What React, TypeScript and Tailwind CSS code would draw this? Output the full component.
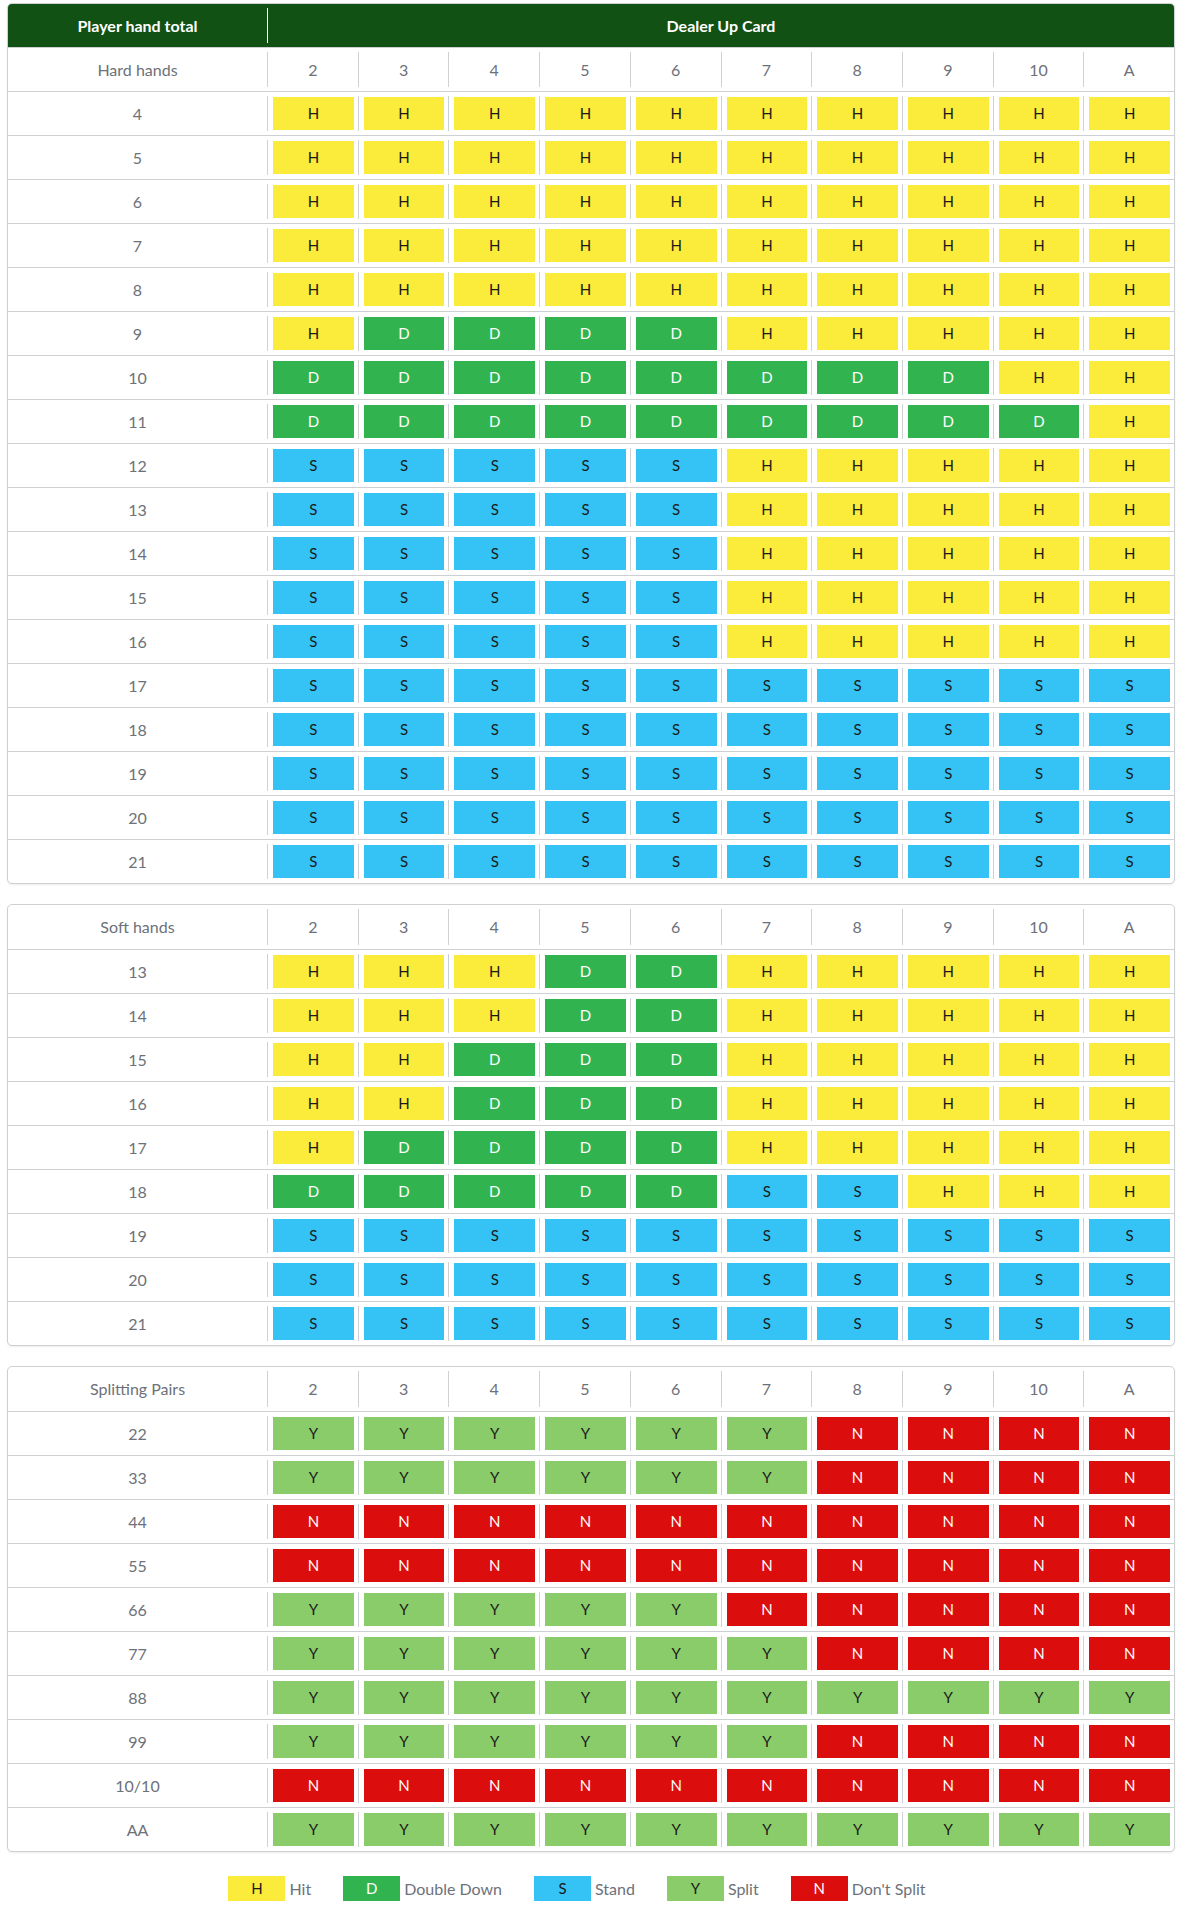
import React from 'react'

type Move = 'H' | 'D' | 'S' | 'Y' | 'N'

const DEALER = ['2', '3', '4', '5', '6', '7', '8', '9', '10', 'A']

const MOVE_STYLE: Record<Move, string> = {
  H: 'bg-[#fbeb3b] text-[#1a1a1a]',
  D: 'bg-[#31b44f] text-white',
  S: 'bg-[#34c3f4] text-[#1a1a1a]',
  Y: 'bg-[#8acb6a] text-[#1a1a1a]',
  N: 'bg-[#dc0d0d] text-white',
}

const row = (s: string) => s.split('') as Move[]

const HARD: [string, Move[]][] = [
  ['4', row('HHHHHHHHHH')],
  ['5', row('HHHHHHHHHH')],
  ['6', row('HHHHHHHHHH')],
  ['7', row('HHHHHHHHHH')],
  ['8', row('HHHHHHHHHH')],
  ['9', row('HDDDDHHHHH')],
  ['10', row('DDDDDDDDHH')],
  ['11', row('DDDDDDDDDH')],
  ['12', row('SSSSSHHHHH')],
  ['13', row('SSSSSHHHHH')],
  ['14', row('SSSSSHHHHH')],
  ['15', row('SSSSSHHHHH')],
  ['16', row('SSSSSHHHHH')],
  ['17', row('SSSSSSSSSS')],
  ['18', row('SSSSSSSSSS')],
  ['19', row('SSSSSSSSSS')],
  ['20', row('SSSSSSSSSS')],
  ['21', row('SSSSSSSSSS')],
]

const SOFT: [string, Move[]][] = [
  ['13', row('HHHDDHHHHH')],
  ['14', row('HHHDDHHHHH')],
  ['15', row('HHDDDHHHHH')],
  ['16', row('HHDDDHHHHH')],
  ['17', row('HDDDDHHHHH')],
  ['18', row('DDDDDSSHHH')],
  ['19', row('SSSSSSSSSS')],
  ['20', row('SSSSSSSSSS')],
  ['21', row('SSSSSSSSSS')],
]

const PAIRS: [string, Move[]][] = [
  ['22', row('YYYYYYNNNN')],
  ['33', row('YYYYYYNNNN')],
  ['44', row('NNNNNNNNNN')],
  ['55', row('NNNNNNNNNN')],
  ['66', row('YYYYYNNNNN')],
  ['77', row('YYYYYYNNNN')],
  ['88', row('YYYYYYYYYY')],
  ['99', row('YYYYYYNNNN')],
  ['10/10', row('NNNNNNNNNN')],
  ['AA', row('YYYYYYYYYY')],
]

const LEGEND: [Move, string][] = [
  ['H', 'Hit'],
  ['D', 'Double Down'],
  ['S', 'Stand'],
  ['Y', 'Split'],
  ['N', "Don't Split"],
]

function Row({ label, first, children }: { label: string; first?: boolean; children: React.ReactNode }) {
  return (
    <div className={`flex h-[44px] ${first ? '' : 'border-t border-[#cdd1d4]'}`}>
      <div className="w-[259px] shrink-0 flex items-center justify-center">{label}</div>
      {children}
    </div>
  )
}

function Section({ title, rows, withHeader }: { title: string; rows: [string, Move[]][]; withHeader?: boolean }) {
  return (
    <div className="border border-[#cdd1d4] rounded-[5px] overflow-hidden bg-white shadow-[0_1px_2px_rgba(0,0,0,0.08)]">
      {withHeader && (
        <div className="flex h-[43px] bg-[#115113] text-white font-bold text-[16px]">
          <div className="w-[259px] shrink-0 flex items-center justify-center">Player hand total</div>
          <div className="flex-1 py-1 flex">
            <div className="flex-1 border-l border-white flex items-center justify-center">Dealer Up Card</div>
          </div>
        </div>
      )}
      <Row label={title} first={!withHeader}>
        {DEALER.map((d) => (
          <div key={d} className="flex-1 py-1 flex">
            <div className="flex-1 border-l border-[#cdd1d4] flex items-center justify-center">{d}</div>
          </div>
        ))}
      </Row>
      {rows.map(([label, moves]) => (
        <Row key={label} label={label}>
          {moves.map((m, i) => (
            <div key={i} className="flex-1 py-1 flex">
              <div className="flex-1 border-l border-[#cdd1d4] flex items-center pl-[5px] pr-[4px]">
                <div className={`flex-1 h-[33px] flex items-center justify-center text-[15px] ${MOVE_STYLE[m]}`}>{m}</div>
              </div>
            </div>
          ))}
        </Row>
      ))}
    </div>
  )
}

export default function App() {
  return (
    <div className="bg-white min-h-[1916px] pt-[3px] text-[16px] text-[#6d717a] font-['Lato','Open_Sans',sans-serif]">
      <div className="ml-[7px] w-[1168px] flex flex-col gap-[20px]">
        <Section title="Hard hands" rows={HARD} withHeader />
        <Section title="Soft hands" rows={SOFT} />
        <Section title="Splitting Pairs" rows={PAIRS} />
      </div>
      <div className="ml-[7px] w-[1168px] mt-[24px] flex justify-center pl-[4px]">
        {LEGEND.map(([m, text]) => (
          <div key={m} className="flex items-center mr-[32px]">
            <div className={`w-[57px] h-[25px] flex items-center justify-center text-[15px] ${MOVE_STYLE[m]}`}>{m}</div>
            <span className="ml-1">{text}</span>
          </div>
        ))}
      </div>
    </div>
  )
}
